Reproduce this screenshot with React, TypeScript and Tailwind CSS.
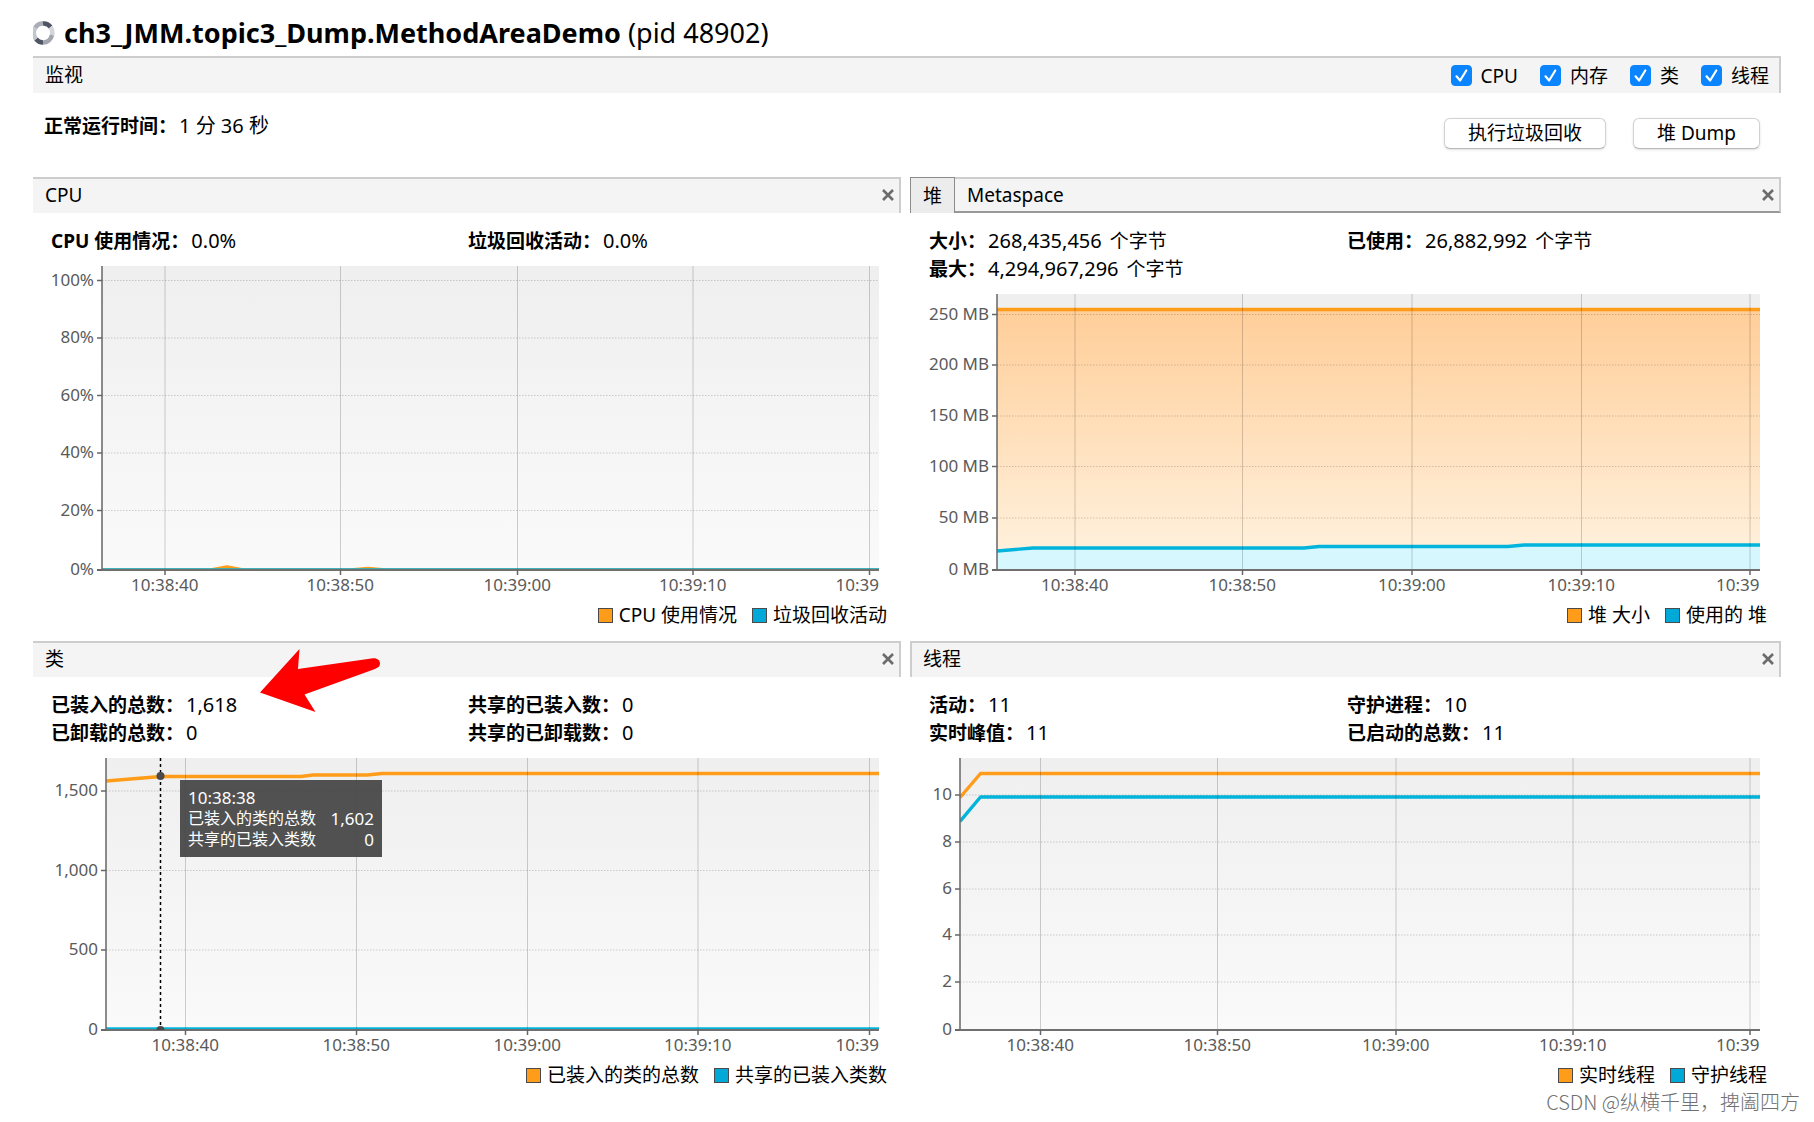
import { useState } from "react";

type Point = [number, number];

interface Tick {
  pos: number;
  label: string;
}

interface Series {
  color: string;
  points: Point[];
  fill?: string;
}

interface ChartProps {
  id: string;
  title: string;
  width: number;
  left: number;
  right: number;
  bottom: number;
  xTicks: number[];
  yTicks: Tick[];
  series: Series[];
  marker?: { x: number; points: Point[] };
}

interface StatProps {
  label: string;
  value: string;
  unit?: string;
}

interface LegendItem {
  label: string;
  swatch: string;
}

const TIMES = ["10:38:40", "10:38:50", "10:39:00", "10:39:10", "10:39"];
const ORANGE = "#ff9c1a";
const BLUE = "#00b4dc";

const Chart: React.FC<ChartProps> = ({
  id,
  title,
  width,
  left,
  right,
  bottom,
  xTicks,
  yTicks,
  series,
  marker,
}) => {
  const toPath = (points: Point[]) => points.map((p) => p.join(",")).join(" ");

  return (
    <svg
      viewBox={`0 0 ${width} ${bottom + 30}`}
      className="block w-full text-[17px]"
      role="img"
      aria-label={title}
    >
      <defs>
        <linearGradient id={`${id}-bg`} x1="0" y1="0" x2="0" y2="1">
          <stop offset="0" stopColor="#efefef" />
          <stop offset="1" stopColor="#fafafa" />
        </linearGradient>
        <linearGradient id={`${id}-orange`} x1="0" y1="0" x2="0" y2="1">
          <stop offset="0" stopColor="#ffce99" />
          <stop offset="1" stopColor="#fff3e1" />
        </linearGradient>
        <clipPath id={`${id}-clip`}>
          <rect x={left} y="0" width={right - left} height={bottom} />
        </clipPath>
      </defs>
      <rect x={left} y="0" width={right - left} height={bottom} fill={`url(#${id}-bg)`} />

      <g clipPath={`url(#${id}-clip)`}>
        {series.map((s, i) =>
          s.fill ? (
            <polygon
              key={i}
              fill={s.fill}
              points={`${left},${bottom} ${toPath(s.points)} ${right},${bottom}`}
            />
          ) : null
        )}
        {series.map((s, i) => (
          <polyline
            key={i}
            points={toPath(s.points)}
            fill="none"
            stroke={s.color}
            strokeWidth="3.4"
            strokeLinejoin="round"
          />
        ))}
      </g>

      {/* Grid */}
      {yTicks.map((t) => (
        <line
          key={t.label}
          x1={left}
          x2={right}
          y1={t.pos}
          y2={t.pos}
          stroke="#000"
          strokeOpacity="0.18"
          strokeDasharray="1.5 1.5"
        />
      ))}
      {xTicks.map((x) => (
        <line key={x} x1={x} x2={x} y1="0" y2={bottom} stroke="#000" strokeOpacity="0.18" />
      ))}

      {/* Axes */}
      <line x1={left} x2={left} y1="0" y2={bottom} stroke="#666" strokeWidth="1.5" />
      <line x1={left - 5} x2={right} y1={bottom} y2={bottom} stroke="#707070" strokeWidth="2" />
      {yTicks.map((t) => (
        <g key={t.label}>
          <line x1={left - 5} x2={left} y1={t.pos} y2={t.pos} stroke="#666" strokeWidth="1.5" />
          <text x={left - 8} y={t.pos + 5} textAnchor="end" fill="#5a5a5a">
            {t.label}
          </text>
        </g>
      ))}
      {xTicks.map((x, i) => (
        <g key={x}>
          <line x1={x} x2={x} y1={bottom} y2={bottom + 5} stroke="#666" strokeWidth="1.5" />
          <text x={x - 34} y={bottom + 21} fill="#5a5a5a">
            {TIMES[i]}
          </text>
        </g>
      ))}

      {marker && (
        <g clipPath={`url(#${id}-clip)`}>
          <line
            x1={marker.x}
            x2={marker.x}
            y1="0"
            y2={bottom}
            stroke="#000"
            strokeWidth="1.5"
            strokeDasharray="3 3"
          />
          {marker.points.map(([x, y]) => (
            <circle key={y} cx={x} cy={y} r="4" fill="#4a4a4a" />
          ))}
        </g>
      )}
    </svg>
  );
};

const Stat: React.FC<StatProps> = ({ label, value, unit }) => (
  <div className="flex h-7 items-center gap-0.5 whitespace-nowrap">
    <dt className="font-bold">{label}：</dt>
    <dd className="text-[20px]">
      {value}
      {unit && <span className="ml-2 text-[19px]">{unit}</span>}
    </dd>
  </div>
);

const Legend: React.FC<{ items: LegendItem[] }> = ({ items }) => (
  <ul className="flex h-[30px] items-center justify-end gap-[15px] pr-3.5">
    {items.map((item) => (
      <li key={item.label} className="flex items-center gap-1.5 whitespace-nowrap">
        <span className={`size-[15px] border border-[#4a4a4a] ${item.swatch}`} />
        {item.label}
      </li>
    ))}
  </ul>
);

const CloseButton: React.FC<{ label: string }> = ({ label }) => (
  <button type="button" aria-label={`关闭 ${label}`} className="ml-auto pr-[5px]">
    <svg width="12" height="12" viewBox="0 0 12 12" stroke="#6b6b6b" strokeWidth="2.6">
      <path d="M1 1l10 10M11 1L1 11" />
    </svg>
  </button>
);

const PanelTitle: React.FC<{ title: string; className?: string }> = ({
  title,
  className = "pl-3",
}) => (
  <header
    className={`flex h-9 items-center border-t-2 border-r-2 border-[#cdcdcd] bg-[#f4f4f4] pb-0.5 ${className}`}
  >
    <h2>{title}</h2>
    <CloseButton label={title} />
  </header>
);

const App = () => {
  const [shown, setShown] = useState({ CPU: true, 内存: true, 类: true, 线程: true });
  const [tab, setTab] = useState("堆");

  const toggle = (name: keyof typeof shown) => {
    setShown((prev) => ({ ...prev, [name]: !prev[name] }));
  };

  return (
    <main className="min-h-screen bg-white font-['Noto_Sans','Noto_Sans_CJK_SC',sans-serif] text-[19px] leading-7 text-black">
      <div className="px-[33px]">
        <h1 className="flex h-14 items-center gap-[9px] pt-2.5 text-[27px] font-bold whitespace-nowrap">
          <svg width="22" height="24" viewBox="0 0 22 24" fill="none" strokeWidth="4.5">
            <path d="M2.2 7A9 9.5 0 0 1 10 2.6" stroke="#a9adb8" />
            <path d="M10 2.6A9 9.5 0 0 1 17.6 6" stroke="#4f5565" />
            <path d="M17.6 6A9 9.5 0 0 1 19 14" stroke="#d3d5db" />
            <path d="M19 14A9 9.5 0 0 1 10 21.4" stroke="#a2a6ae" />
            <path d="M10 21.4A9 9.5 0 0 1 3 18" stroke="#4f5565" />
            <path d="M3 18A9 9.5 0 0 1 2.2 7" stroke="#c3c6ce" />
          </svg>
          <span>
            ch3_JMM.topic3_Dump.MethodAreaDemo <span className="font-normal">(pid 48902)</span>
          </span>
        </h1>

        {/* Monitor bar */}
        <div className="flex h-[37px] items-center justify-between border-t-2 border-r-2 border-[#cdcdcd] bg-[#f4f4f4] pr-2.5 pl-3">
          <h2 className="pb-0.5">监视</h2>
          <div className="flex items-center gap-[22px]">
            {(Object.keys(shown) as (keyof typeof shown)[]).map((name) => (
              <label key={name} className="flex items-center gap-[9px]">
                <span className="relative size-[21px]">
                  <input
                    type="checkbox"
                    checked={shown[name]}
                    onChange={() => toggle(name)}
                    className="peer block size-full appearance-none rounded-[4px] border border-gray-400 bg-white checked:border-[#0a84ff] checked:bg-[#0a84ff]"
                  />
                  <svg
                    viewBox="0 0 21 21"
                    fill="none"
                    stroke="#fff"
                    strokeWidth="2.2"
                    strokeLinecap="round"
                    strokeLinejoin="round"
                    className="pointer-events-none absolute inset-0 hidden peer-checked:block"
                  >
                    <path d="M5.5 11.3l3.6 4.2L15.3 5.5" />
                  </svg>
                </span>
                {name}
              </label>
            ))}
          </div>
        </div>

        <div className="flex h-[84px] justify-between pt-[19px] pr-[21px] pl-[11px]">
          <dl>
            <Stat label="正常运行时间" value="1 分 36 秒" />
          </dl>
          <div className="flex gap-[27px] pt-[6px]">
            <button
              type="button"
              className="flex h-[31px] items-center rounded-[6px] border border-[#d2d2d2] border-b-[#b8b8b8] bg-white px-[23px] pb-0.5 shadow-sm"
            >
              执行垃圾回收
            </button>
            <button
              type="button"
              className="flex h-[31px] items-center rounded-[6px] border border-[#d2d2d2] border-b-[#b8b8b8] bg-white px-[23px] pb-0.5 shadow-sm"
            >
              堆 Dump
            </button>
          </div>
        </div>

        <div className="grid grid-cols-[868fr_871fr] gap-x-[9px] gap-y-[11px]">
          {/* CPU */}
          <section>
            <PanelTitle title="CPU" />
            <dl className="grid grid-cols-2 pt-[14px] pr-4 pb-[11px] pl-[18px]">
              <Stat label="CPU 使用情况" value="0.0%" />
              <Stat label="垃圾回收活动" value="0.0%" />
            </dl>
            <Chart
              id="cpu"
              title="CPU"
              width={868}
              left={69}
              right={846}
              bottom={304}
              xTicks={[132, 307.5, 484.5, 660, 836.5]}
              yTicks={[
                { pos: 14.5, label: "100%" },
                { pos: 72, label: "80%" },
                { pos: 129.5, label: "60%" },
                { pos: 187, label: "40%" },
                { pos: 244.5, label: "20%" },
                { pos: 304, label: "0%" },
              ]}
              series={[
                {
                  color: ORANGE,
                  points: [
                    [69, 304],
                    [178, 304],
                    [194, 301],
                    [210, 304],
                    [318, 304],
                    [335, 302.5],
                    [352, 304],
                    [846, 304],
                  ],
                },
                { color: BLUE, points: [[69, 304], [846, 304]] },
              ]}
            />
            <Legend
              items={[
                { label: "CPU 使用情况", swatch: "bg-[#ff9c1a]" },
                { label: "垃圾回收活动", swatch: "bg-[#00a9d8]" },
              ]}
            />
          </section>

          {/* Heap / Metaspace */}
          <section>
            <header className="flex h-9 border-t-2 border-r-2 border-b-2 border-t-[#cdcdcd] border-r-[#cdcdcd] border-b-[#999] bg-[#f4f4f4]">
              <div role="tablist" className="flex">
                {["堆", "Metaspace"].map((name) => (
                  <button
                    key={name}
                    type="button"
                    role="tab"
                    aria-selected={tab === name}
                    onClick={() => setTab(name)}
                    className="px-3 aria-selected:-mt-0.5 aria-selected:-mb-0.5 aria-selected:border aria-selected:border-b-0 aria-selected:border-[#8c8c8c] aria-selected:bg-[#ececec]"
                  >
                    {name}
                  </button>
                ))}
              </div>
              <CloseButton label="内存" />
            </header>
            <dl className="grid grid-cols-2 pt-[14px] pr-4 pb-[11px] pl-[19px]">
              <Stat label="大小" value="268,435,456" unit="个字节" />
              <Stat label="已使用" value="26,882,992" unit="个字节" />
              <Stat label="最大" value="4,294,967,296" unit="个字节" />
            </dl>
            <Chart
              id="heap"
              title="堆"
              width={871}
              left={87}
              right={850}
              bottom={276}
              xTicks={[165, 332.5, 502, 671.5, 840]}
              yTicks={[
                { pos: 20.5, label: "250 MB" },
                { pos: 71, label: "200 MB" },
                { pos: 122, label: "150 MB" },
                { pos: 172.5, label: "100 MB" },
                { pos: 224, label: "50 MB" },
                { pos: 276, label: "0 MB" },
              ]}
              series={[
                { color: ORANGE, fill: "url(#heap-orange)", points: [[87, 15.5], [850, 15.5]] },
                {
                  color: BLUE,
                  fill: "#d7f7ff",
                  points: [
                    [87, 257],
                    [123, 254],
                    [394, 254],
                    [409, 252.5],
                    [598, 252.5],
                    [614, 251],
                    [850, 251],
                  ],
                },
              ]}
            />
            <Legend
              items={[
                { label: "堆 大小", swatch: "bg-[#ff9c1a]" },
                { label: "使用的 堆", swatch: "bg-[#00a9d8]" },
              ]}
            />
          </section>

          {/* Classes */}
          <section className="relative">
            <PanelTitle title="类" />
            <dl className="grid grid-cols-2 pt-[14px] pr-4 pb-[11px] pl-[18px]">
              <Stat label="已装入的总数" value="1,618" />
              <Stat label="共享的已装入数" value="0" />
              <Stat label="已卸载的总数" value="0" />
              <Stat label="共享的已卸载数" value="0" />
            </dl>
            <div className="relative">
              <Chart
                id="classes"
                title="类"
                width={868}
                left={73}
                right={846}
                bottom={272}
                xTicks={[152.5, 323.5, 494.5, 665, 836.5]}
                yTicks={[
                  { pos: 33, label: "1,500" },
                  { pos: 112.5, label: "1,000" },
                  { pos: 192, label: "500" },
                  { pos: 272, label: "0" },
                ]}
                series={[
                  {
                    color: ORANGE,
                    points: [
                      [73, 23],
                      [128, 18.5],
                      [268, 18.5],
                      [280, 17],
                      [334, 17],
                      [349, 15.5],
                      [846, 15.5],
                    ],
                  },
                  { color: BLUE, points: [[73, 271], [846, 271]] },
                ]}
                marker={{ x: 127.5, points: [[127.5, 18], [127.5, 272]] }}
              />
              <div className="absolute top-[22px] left-[147px] h-[77px] w-[202px] bg-[#484848]/95 px-2 py-[7px] text-[16px] leading-[21px] text-white">
                <div className="text-[17px]">10:38:38</div>
                <div className="flex justify-between">
                  已装入的类的总数 <span className="text-[17px]">1,602</span>
                </div>
                <div className="flex justify-between">
                  共享的已装入类数 <span className="text-[17px]">0</span>
                </div>
              </div>
            </div>
            <Legend
              items={[
                { label: "已装入的类的总数", swatch: "bg-[#ff9c1a]" },
                { label: "共享的已装入类数", swatch: "bg-[#00a9d8]" },
              ]}
            />
            <svg
              width="121"
              height="63"
              viewBox="0 0 121 63"
              className="pointer-events-none absolute top-2 left-[227px]"
            >
              <path
                d="M0 43.5L39.5 0L38 20L113 9.3C117.500 9 120 11.500 120 14.500C120 17 118.500 18.500 115 20L44.500 45.500L55.500 63Z"
                fill="#ff0000"
              />
            </svg>
          </section>

          {/* Threads */}
          <section>
            <PanelTitle title="线程" className="border-l-2 pl-[11px]" />
            <dl className="grid grid-cols-2 pt-[14px] pr-4 pb-[11px] pl-[19px]">
              <Stat label="活动" value="11" />
              <Stat label="守护进程" value="10" />
              <Stat label="实时峰值" value="11" />
              <Stat label="已启动的总数" value="11" />
            </dl>
            <Chart
              id="threads"
              title="线程"
              width={871}
              left={50}
              right={850}
              bottom={272}
              xTicks={[130.5, 307.5, 486, 663, 840]}
              yTicks={[
                { pos: 37, label: "10" },
                { pos: 84, label: "8" },
                { pos: 131, label: "6" },
                { pos: 177, label: "4" },
                { pos: 224, label: "2" },
                { pos: 272, label: "0" },
              ]}
              series={[
                { color: ORANGE, points: [[50, 39.5], [70.5, 15.5], [850, 15.5]] },
                { color: BLUE, points: [[50, 63.5], [70.5, 39], [850, 39]] },
              ]}
            />
            <Legend
              items={[
                { label: "实时线程", swatch: "bg-[#ff9c1a]" },
                { label: "守护线程", swatch: "bg-[#00a9d8]" },
              ]}
            />
          </section>
        </div>
      </div>
      <p className="pr-3.5 text-right font-['Noto_Sans_CJK_SC',sans-serif] text-[20px] leading-6 font-light text-[#707070]">
        CSDN @纵横千里，捭阖四方
      </p>
    </main>
  );
};

export default App;
